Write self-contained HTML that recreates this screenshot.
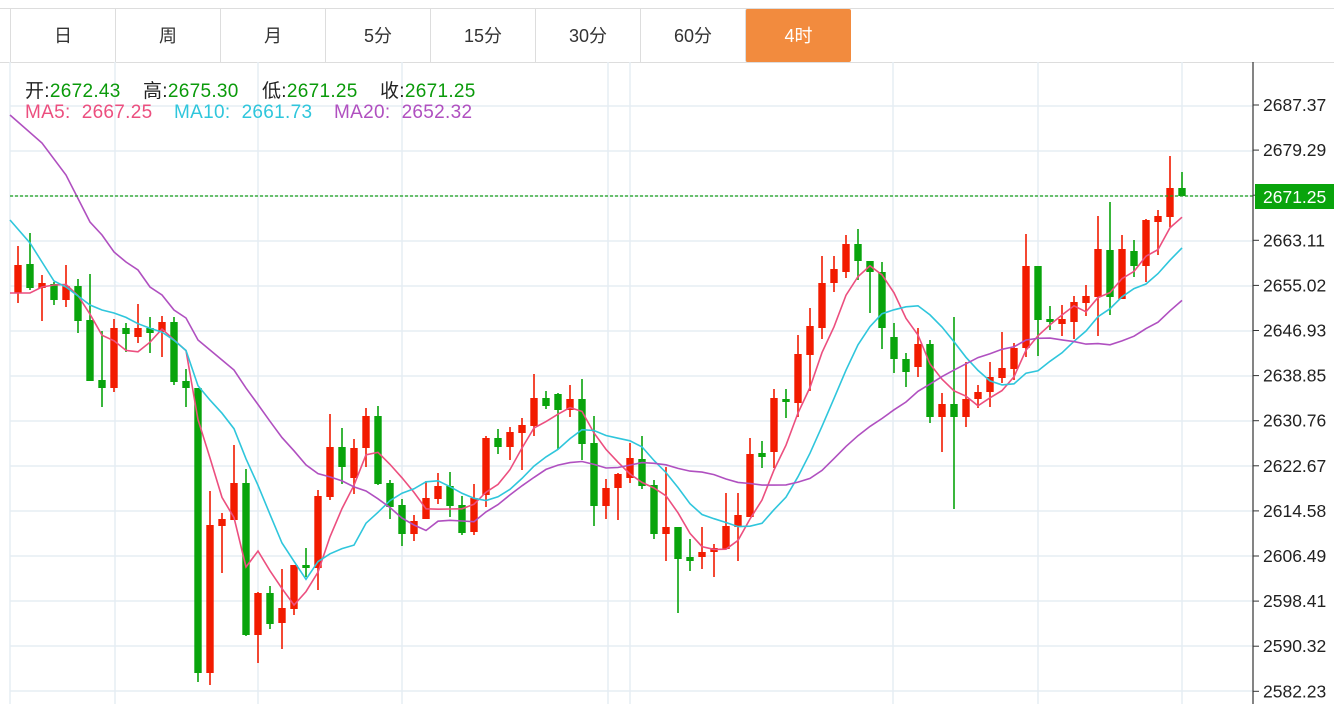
<!DOCTYPE html>
<html><head><meta charset="utf-8"><style>
html,body{margin:0;padding:0;background:#fff;width:1334px;height:704px;overflow:hidden;font-family:"Liberation Sans","Noto Sans CJK SC",sans-serif}
.tabs{position:absolute;left:0;top:8px;width:1334px;height:53px;border-top:1px solid #ddd;border-bottom:1px solid #ddd}
.tab{position:absolute;top:0;height:53px;width:104px;border-left:1px solid #ddd;text-align:center;line-height:55px;font-size:18px;color:#333}
.act{background:#f28b3e;color:#fff;border-radius:2px}
.leg{position:absolute;font-size:19px;white-space:pre;letter-spacing:0.3px}
.g{color:#0a9a0a}
</style></head><body>
<div class="tabs">
<div class="tab" style="left:10px">日</div>
<div class="tab" style="left:115px">周</div>
<div class="tab" style="left:220px">月</div>
<div class="tab" style="left:325px">5分</div>
<div class="tab" style="left:430px">15分</div>
<div class="tab" style="left:535px">30分</div>
<div class="tab" style="left:640px">60分</div>
<div class="tab act" style="left:745px;width:105px">4时</div>
</div>
<svg id="c" width="1334" height="704" style="position:absolute;left:0;top:0"></svg>
<div class="leg" style="top:76px;left:25px;color:#222">开:<span class="g">2672.43</span></div>
<div class="leg" style="top:76px;left:143px;color:#222">高:<span class="g">2675.30</span></div>
<div class="leg" style="top:76px;left:262px;color:#222">低:<span class="g">2671.25</span></div>
<div class="leg" style="top:76px;left:380px;color:#222">收:<span class="g">2671.25</span></div>
<div class="leg" style="top:102px;left:25px;color:#ec4f7f">MA5:  2667.25</div>
<div class="leg" style="top:102px;left:174px;color:#2fc6dc">MA10:  2661.73</div>
<div class="leg" style="top:102px;left:334px;color:#b050c0">MA20:  2652.32</div>
<script>
var d=[
['r',265,293,246,303],['g',264,288,233,290],['r',283,288,275,321],['g',284,300,282,305],['r',286,300,265,307],
['g',286,321,279,333],['g',320,381,274,381],['g',380,388,331,407],['r',328,388,319,392],['g',328,334,323,352],
['r',328,337,304,343],['g',328,333,317,353],['r',322,332,316,357],['g',322,382,317,385],['g',381,388,369,407],
['g',388,673,388,682],['r',525,673,491,685],['r',519,526,513,573],['r',483,520,445,520],['g',483,635,469,636],
['r',593,635,592,663],['g',593,624,586,629],['r',608,623,569,649],['r',565,609,565,615],['g',565,568,548,577],
['r',496,568,490,590],['r',447,497,414,500],['g',447,467,428,484],['r',448,478,439,494],['r',416,448,408,467],
['g',416,484,406,485],['g',483,507,480,519],['g',505,534,499,546],['r',521,534,515,541],['r',498,519,481,519],
['r',486,499,473,504],['g',486,506,472,517],['g',505,533,496,535],['r',498,532,484,535],['r',438,495,436,507],
['g',438,447,429,454],['r',432,447,427,460],['r',425,433,418,470],['r',398,426,374,436],['g',398,406,391,409],
['g',394,410,393,449],['r',399,410,385,417],['g',399,444,379,460],['g',443,506,416,526],['r',488,506,479,519],
['r',474,488,473,520],['r',458,478,443,483],['g',459,486,436,489],['g',485,534,480,539],['r',527,534,467,561],
['g',527,559,527,613],['g',557,561,539,571],['r',552,557,527,569],['r',548,552,544,577],['r',526,549,493,549],
['r',515,527,493,561],['r',454,517,438,517],['g',453,457,441,468],['r',398,452,389,468],['g',399,402,389,418],
['r',354,403,335,417],['r',326,355,308,391],['r',283,328,256,339],['r',269,283,256,292],['r',244,272,235,278],
['g',244,261,229,280],['g',261,272,261,313],['g',272,328,262,349],['g',337,359,323,373],['g',359,372,353,387],
['r',344,367,328,377],['g',344,417,340,423],['r',404,417,393,452],['g',404,417,317,509],['r',399,417,362,427],
['r',392,399,385,408],['r',377,392,362,407],['r',368,378,332,383],['r',348,369,343,380],['r',266,348,234,357],
['g',266,320,266,356],['g',319,322,306,330],['r',319,324,305,336],['r',302,322,296,339],['r',296,303,285,316],
['r',249,297,216,336],['g',250,297,202,315],['r',249,299,235,299],['g',251,266,240,277],['r',220,266,219,282],
['r',216,222,210,255],['r',188,217,156,227],['g',188,196,172,196]];
var s='';
var hy=[106,151,196,241,286,331,376,421,466,511,556,601,646,691];
hy.forEach(function(y){s+='<line x1="10" x2="1253" y1="'+y+'" y2="'+y+'" stroke="#e5edf3" stroke-width="1.5"/>'});
[10,115,258,402,608,630,893,1038,1182].forEach(function(x){s+='<line x1="'+x+'" x2="'+x+'" y1="62" y2="704" stroke="#e5edf3" stroke-width="1.5"/>'});
d.forEach(function(c,i){var x=18+12*i,col=c[0]=='r'?'#f21b00':'#09a40c';
s+='<line x1="'+x+'" x2="'+x+'" y1="'+c[3]+'" y2="'+c[4]+'" stroke="'+col+'" stroke-width="1.6"/>';
var h=Math.max(c[2]-c[1],2);s+='<rect x="'+(x-3.7)+'" y="'+c[1]+'" width="7.4" height="'+h+'" fill="'+col+'"/>';});
var cl=d.map(function(c){return c[0]=='r'?c[1]:c[2]});
function ma(n,pre,col){var p=pre.slice();for(var i=n-1;i<cl.length;i++){var t=0;for(var k=0;k<n;k++)t+=cl[i-k];p.push([18+12*i,t/n]);}
s+='<polyline fill="none" stroke="'+col+'" stroke-width="1.6" points="'+p.map(function(q){return q[0]+','+q[1].toFixed(1)}).join(' ')+'"/>';}
ma(5,[[10,293],[18,293],[30,293],[42,287],[54,285]],'#ec4f7f');
ma(10,[[10,220],[30,243],[42,262],[54,281],[66,287],[78,296],[90,305],[102,310],[114,313]],'#2fc6dc');
ma(20,[[10,115],[42,143],[66,175],[90,222],[102,235],[114,252],[126,262],[138,270],[150,287],[162,295],[174,310],[186,318],[198,340],[210,350],[222,360],[234,370]],'#b050c0');
s+='<line x1="10" x2="1253" y1="196" y2="196" stroke="#1aa01a" stroke-width="1.3" stroke-dasharray="3,2"/>';
s+='<line x1="1253" x2="1253" y1="62" y2="704" stroke="#333" stroke-width="1.2"/>';
var lab=['2687.37','2679.29','2671.25','2663.11','2655.02','2646.93','2638.85','2630.76','2622.67','2614.58','2606.49','2598.41','2590.32','2582.23'];
lab.forEach(function(t,i){var y=105+i*45.1;s+='<line x1="1253" x2="1259" y1="'+y+'" y2="'+y+'" stroke="#333"/>';
if(i==2){s+='<rect x="1255" y="184" width="79" height="25" fill="#09a40c"/><text x="1263" y="203" font-size="17.5" fill="#fff" font-family="Liberation Sans,sans-serif">'+t+'</text>';}
else s+='<text x="1263" y="'+(y+6)+'" font-size="17.5" fill="#222" font-family="Liberation Sans,sans-serif">'+t+'</text>';});
document.getElementById('c').innerHTML=s;
</script>
</body></html>
